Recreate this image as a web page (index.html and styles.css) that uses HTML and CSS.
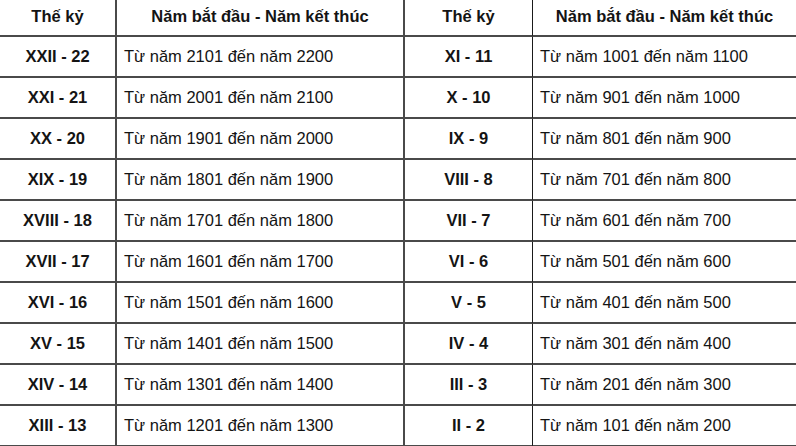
FILE: index.html
```html
<!DOCTYPE html>
<html lang="vi">
<head>
<meta charset="utf-8">
<title>Thế kỷ</title>
<link rel="stylesheet" href="styles.css">
</head>
<body>
<table class="centuries">
  <colgroup>
    <col class="c1"><col class="c2"><col class="c3"><col class="c4">
  </colgroup>
  <thead>
    <tr>
      <th class="k">Thế kỷ</th>
      <th class="y">Năm bắt đầu - Năm kết thúc</th>
      <th class="k k2">Thế kỷ</th>
      <th class="y last">Năm bắt đầu - Năm kết thúc</th>
    </tr>
  </thead>
  <tbody>
    <tr><td class="k">XXII - 22</td><td class="y">Từ năm 2101 đến năm 2200</td><td class="k k2">XI - 11</td><td class="y last">Từ năm 1001 đến năm 1100</td></tr>
    <tr><td class="k">XXI - 21</td><td class="y">Từ năm 2001 đến năm 2100</td><td class="k k2">X - 10</td><td class="y last">Từ năm 901 đến năm 1000</td></tr>
    <tr><td class="k">XX - 20</td><td class="y">Từ năm 1901 đến năm 2000</td><td class="k k2">IX - 9</td><td class="y last">Từ năm 801 đến năm 900</td></tr>
    <tr><td class="k">XIX - 19</td><td class="y">Từ năm 1801 đến năm 1900</td><td class="k k2">VIII - 8</td><td class="y last">Từ năm 701 đến năm 800</td></tr>
    <tr><td class="k">XVIII - 18</td><td class="y">Từ năm 1701 đến năm 1800</td><td class="k k2">VII - 7</td><td class="y last">Từ năm 601 đến năm 700</td></tr>
    <tr><td class="k">XVII - 17</td><td class="y">Từ năm 1601 đến năm 1700</td><td class="k k2">VI - 6</td><td class="y last">Từ năm 501 đến năm 600</td></tr>
    <tr><td class="k">XVI - 16</td><td class="y">Từ năm 1501 đến năm 1600</td><td class="k k2">V - 5</td><td class="y last">Từ năm 401 đến năm 500</td></tr>
    <tr><td class="k">XV - 15</td><td class="y">Từ năm 1401 đến năm 1500</td><td class="k k2">IV - 4</td><td class="y last">Từ năm 301 đến năm 400</td></tr>
    <tr><td class="k">XIV - 14</td><td class="y">Từ năm 1301 đến năm 1400</td><td class="k k2">III - 3</td><td class="y last">Từ năm 201 đến năm 300</td></tr>
    <tr><td class="k">XIII - 13</td><td class="y">Từ năm 1201 đến năm 1300</td><td class="k k2">II - 2</td><td class="y last">Từ năm 101 đến năm 200</td></tr>
  </tbody>
</table>
</body>
</html>
```

FILE: styles.css
```css
html, body {
  margin: 0;
  padding: 0;
  background: #fff;
}
body {
  width: 796px;
  height: 446px;
  overflow: hidden;
  font-family: "Liberation Sans", Arial, sans-serif;
  font-size: 16.5px;
  color: #141414;
}
.centuries {
  border-collapse: separate;
  border-spacing: 0;
  table-layout: fixed;
  width: 796px;
}
.c1 { width: 117px; }
.c2 { width: 288px; }
.c3 { width: 128px; }
.c4 { width: 263px; }

.centuries th,
.centuries td {
  padding: 0;
  border-bottom: 2px solid #4a4a4a;
  border-right: 2px solid #4a4a4a;
  vertical-align: middle;
  white-space: nowrap;
  box-sizing: border-box;
}
.centuries th {
  height: 37px;
  font-weight: bold;
  text-align: center;
  padding-bottom: 3px;
}
.centuries td {
  height: 41px;
}
.centuries .k {
  font-weight: bold;
  text-align: center;
}
.centuries td.y {
  text-align: left;
  padding-left: 7px;
}
.centuries .k2 {
  border-right: 1px solid #1a1a1a;
}
.centuries .last {
  border-right: none;
}
```
